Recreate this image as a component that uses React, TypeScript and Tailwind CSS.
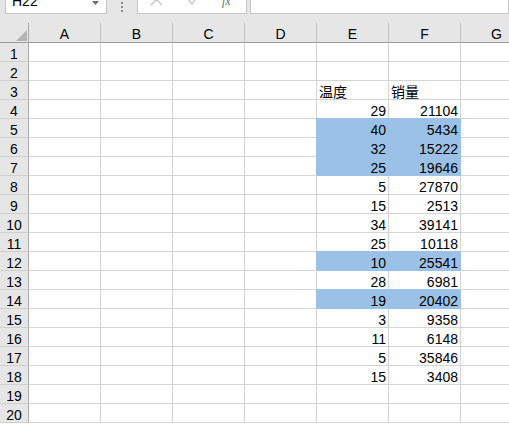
import React from "react";

const cols = ["A", "B", "C", "D", "E", "F", "G"];
const data: Record<number, [string, string]> = {
  3: ["温度", "销量"],
  4: ["29", "21104"],
  5: ["40", "5434"],
  6: ["32", "15222"],
  7: ["25", "19646"],
  8: ["5", "27870"],
  9: ["15", "2513"],
  10: ["34", "39141"],
  11: ["25", "10118"],
  12: ["10", "25541"],
  13: ["28", "6981"],
  14: ["19", "20402"],
  15: ["3", "9358"],
  16: ["11", "6148"],
  17: ["5", "35846"],
  18: ["15", "3408"],
};
const hl = new Set([5, 6, 7, 12, 14]);
const rows = Array.from({ length: 20 }, (_, i) => i + 1);

function Cell({ row, col }: { row: number; col: number }) {
  const d = data[row];
  let text = "";
  if (d && col === 4) text = d[0];
  if (d && col === 5) text = d[1];
  const isHl = hl.has(row) && (col === 4 || col === 5);
  const isText = row === 3;
  return (
    <div
      className={
        "h-[19px] border-r border-b flex items-end leading-[14px] text-[14px] whitespace-nowrap overflow-visible " +
        (isText ? "justify-start pl-[2px] " : "justify-end pr-[2px] ") +
        (isHl
          ? "bg-[#9bc2e6] border-[#9bc2e6] shadow-[-1px_-1px_0_0_#9bc2e6]"
          : "border-[#d4d4d4]")
      }
    >
      {text}
    </div>
  );
}

export default function App() {
  return (
    <div className="w-[509px] h-[425px] overflow-hidden bg-white text-black font-['Liberation_Sans','Noto_Sans_CJK_SC',sans-serif]">
      {/* formula bar */}
      <div className="h-[23px] bg-[#e6e6e6] overflow-hidden">
        <div className="flex items-start -mt-[10px]">
          <div className="ml-[5px] w-[102px] h-[24px] shrink-0 bg-white border border-[#c6c6c6] flex items-end justify-between pb-[5px] pl-[6px] pr-[7px] leading-[14px] text-[14px]">
            <span>H22</span>
            <svg width="7" height="4" viewBox="0 0 7 4" className="mb-[3px]">
              <polygon points="0,0 7,0 3.5,4" fill="#6d6d6d" />
            </svg>
          </div>
          <div className="w-[30px] shrink-0 flex flex-col items-center gap-[2px] pt-[8px]">
            <div className="w-[2px] h-[2px] bg-[#8a8a8a]" />
            <div className="w-[2px] h-[2px] bg-[#8a8a8a]" />
            <div className="w-[2px] h-[2px] bg-[#8a8a8a]" />
            <div className="w-[2px] h-[2px] bg-[#8a8a8a]" />
          </div>
          <div className="w-[110px] h-[24px] shrink-0 bg-white border border-[#c6c6c6] flex items-start pt-[2px] pl-[12px]">
            <svg width="13" height="13" viewBox="0 0 13 13">
              <path d="M1 1 L12 12 M12 1 L1 12" stroke="#c2c2c2" strokeWidth="1.3" fill="none" />
            </svg>
            <svg width="13" height="13" viewBox="0 0 13 13" className="ml-[24px]">
              <path d="M1 6 L5 11 L12 1" stroke="#c2c2c2" strokeWidth="1.3" fill="none" />
            </svg>
            <span className="ml-[22px] mt-[1px] italic text-[12px] leading-[14px] text-[#6d6d6d] font-['Liberation_Serif',serif]">
              fx
            </span>
          </div>
          <div className="ml-[3px] flex-1 h-[24px] bg-white border border-[#c6c6c6]" />
        </div>
      </div>
      {/* grid */}
      <div className="grid grid-cols-[29px_repeat(6,72px)_72px]">
        <div className="h-[20px] bg-[#e6e6e6] border-r border-b border-r-[#ababab] border-b-[#9b9b9b] flex items-end justify-end pr-[1px] pb-[1px]">
          <svg width="11" height="11" viewBox="0 0 11 11">
            <polygon points="11,0 11,11 0,11" fill="#b4b4b4" />
          </svg>
        </div>
        {cols.map((c) => (
          <div
            key={c}
            className="h-[20px] bg-[#e6e6e6] border-r border-b border-r-[#c3c3c3] border-b-[#9b9b9b] flex items-end justify-center leading-[14px] text-[14px] pb-[1px]"
          >
            {c}
          </div>
        ))}
        {rows.map((r) => (
          <React.Fragment key={r}>
            <div className="h-[19px] bg-[#e6e6e6] border-r border-b border-r-[#ababab] border-b-[#cfcfcf] flex items-end justify-center leading-[14px] text-[14px]">
              {r}
            </div>
            {cols.map((_, ci) => (
              <Cell key={ci} row={r} col={ci} />
            ))}
          </React.Fragment>
        ))}
      </div>
    </div>
  );
}
